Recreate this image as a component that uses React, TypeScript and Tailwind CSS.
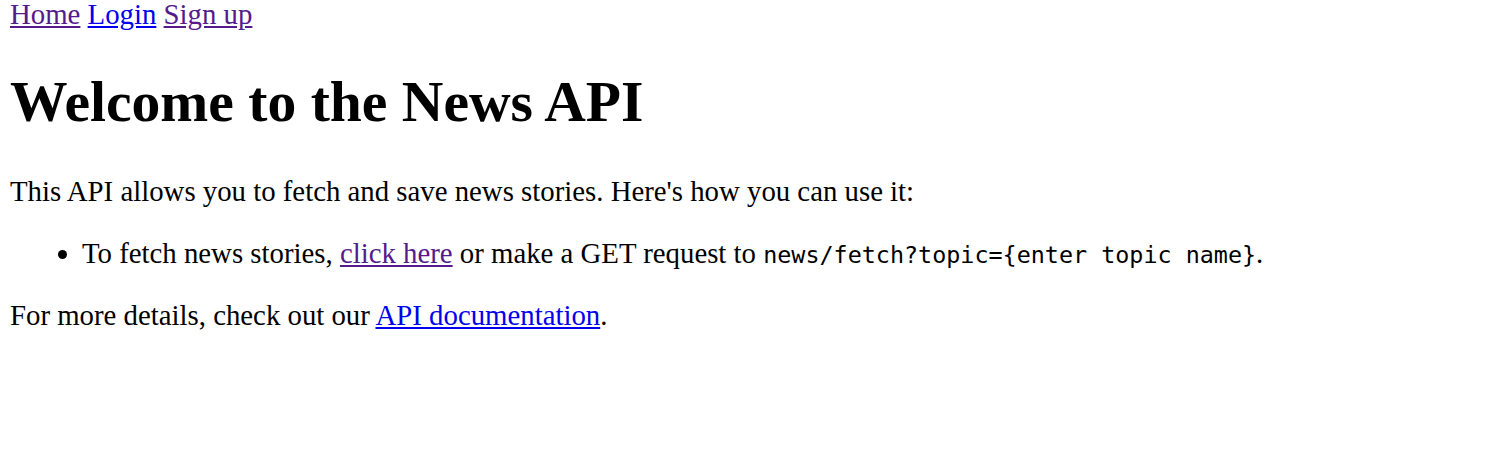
export default function App() {
  return (
    <div className="min-h-screen bg-white px-[10px] text-[28.8px] leading-[normal] text-black [font-family:'Liberation_Serif',serif]">
      <nav className="-mt-[2px]">
        <a href="#" className="text-[#551a8b] underline">Home</a>{" "}
        <a href="#" className="text-[#0000ee] underline">Login</a>{" "}
        <a href="#" className="text-[#551a8b] underline">Sign up</a>
      </nav>
      <h1 className="mt-[37.6px] mb-[41.6px] text-[57.6px] font-bold leading-[normal]">Welcome to the News API</h1>
      <p className="my-[28.8px]">This API allows you to fetch and save news stories. Here's how you can use it:</p>
      <ul className="my-[28.8px] list-disc pl-[72px]">
        <li>
          To fetch news stories, <a href="#" className="text-[#551a8b] underline">click here</a> or make a GET request to{" "}
          <code className="text-[23.4px] [font-family:'DejaVu_Sans_Mono',monospace]">news/fetch?topic=&#123;enter topic name&#125;</code>.
        </li>
      </ul>
      <p className="my-[28.8px]">
        For more details, check out our <a href="#" className="text-[#0000ee] underline">API documentation</a>.
      </p>
    </div>
  );
}
